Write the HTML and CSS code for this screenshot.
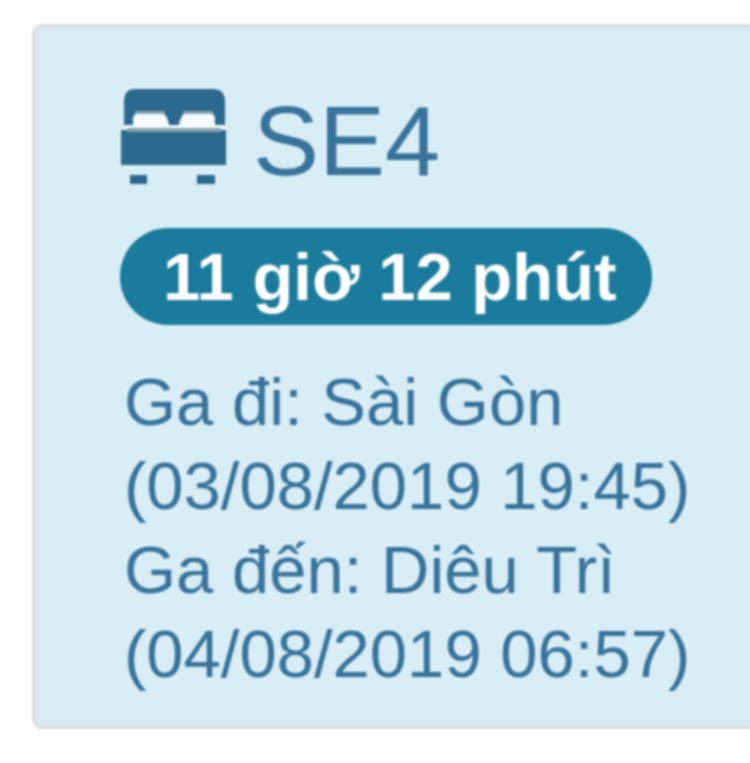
FILE: index.html
```html
<!DOCTYPE html>
<html lang="vi">
<head>
<meta charset="utf-8">
<title>SE4</title>
<link rel="stylesheet" href="styles.css">
</head>
<body>
<div class="card">
  <div class="title">
    <svg class="bed" viewBox="0 0 106 96" aria-hidden="true">
      <rect class="sheet" x="3" y="24" width="100" height="18"/>
      <path class="ink" d="M14 1H92Q104 1 104 14V37H94V31Q94 25 87 25H66Q60 25 58 37H48Q46 25 40 25H19Q12 25 12 31V37H3V14Q3 1 14 1Z"/>
      <rect class="edge" x="14" y="23" width="30" height="3"/>
      <rect class="edge" x="62" y="23" width="30" height="3"/>
      <rect class="ink" x="0" y="42" width="105" height="35"/>
      <rect class="edge" x="6" y="40" width="94" height="4"/>
      <rect class="ink" x="9" y="87" width="17" height="9"/>
      <rect class="ink" x="76" y="87" width="18" height="9"/>
    </svg>
    <span class="code">SE4</span>
  </div>
  <div class="badge">11 giờ 12 phút</div>
  <div class="info">
    Ga đi: Sài Gòn<br>
    (03/08/2019 19:45)<br>
    Ga đến: Diêu Trì<br>
    (04/08/2019 06:57)
  </div>
</div>
</body>
</html>
```
FILE: styles.css
```css
html, body {
  margin: 0;
  height: 763px;
  overflow: hidden;
  background: #fff;
}
.card {
  box-sizing: border-box;
  margin: 24px 0 0 32px;
  width: 740px;
  height: 705px;
  padding: 60px 0 0 85px;
  background: #d9edf7;
  border: 4px solid #dfdfdf;
  border-right: 0;
  border-radius: 10px 0 0 10px;
  color: #37739a;
  font-family: "Liberation Sans", Arial, sans-serif;
  filter: blur(0.8px);
}
.title {
  display: flex;
  align-items: center;
  gap: 26px;
  height: 96px;
  font-size: 99px;
  line-height: 96px;
}
.code {
  padding-top: 10px;
}
.bed {
  width: 106px;
  height: 96px;
  flex: none;
}
.ink {
  fill: #2b6a8e;
}
.edge {
  fill: #8a9fae;
}
.sheet {
  fill: #f4fafd;
}
.badge {
  display: inline-block;
  margin: 44px 0 0 -1px;
  padding: 0 36px 0 43px;
  height: 97px;
  line-height: 97px;
  border-radius: 48px;
  background: #1b7b9c;
  color: #fff;
  font-size: 67px;
  font-weight: 700;
}
.info {
  margin: 35px 0 0 3px;
  font-size: 67px;
  line-height: 84px;
  white-space: nowrap;
}
```
